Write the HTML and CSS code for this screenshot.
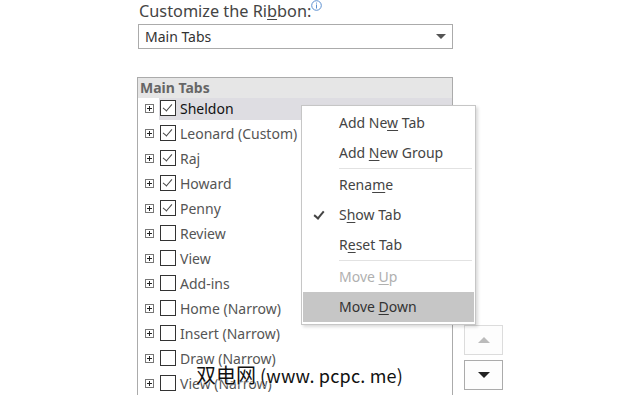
FILE: index.html
```html
<!DOCTYPE html>
<html lang="en">
<head>
  <meta charset="UTF-8" />
  <title>Customize the Ribbon</title>
  <link rel="stylesheet" href="styles.css">
</head>
<body>

<div class="panel">
  <div class="panel-title">
    Customize the Ri<u>b</u>bon:<svg class="info" width="11" height="11" viewBox="0 0 11 11">
      <circle cx="5.5" cy="5.5" r="4.8" fill="none" stroke="#5b8fd0" stroke-width="1"/>
      <rect x="5" y="4.5" width="1" height="4" fill="#5b8fd0"/>
      <rect x="5" y="2.6" width="1" height="1" fill="#5b8fd0"/>
    </svg>
  </div>

  <div class="select">
    <span>Main Tabs</span>
    <span class="caret"></span>
  </div>

  <div class="list-area">
    <div class="tree">
      <div class="tree-header">Main Tabs</div>
      <div class="row selected"><span class="plus"></span><span class="box checked"></span><span class="label">Sheldon</span></div>
      <div class="row"><span class="plus"></span><span class="box checked"></span><span class="label">Leonard (Custom)</span></div>
      <div class="row"><span class="plus"></span><span class="box checked"></span><span class="label">Raj</span></div>
      <div class="row"><span class="plus"></span><span class="box checked"></span><span class="label">Howard</span></div>
      <div class="row"><span class="plus"></span><span class="box checked"></span><span class="label">Penny</span></div>
      <div class="row"><span class="plus"></span><span class="box"></span><span class="label">Review</span></div>
      <div class="row"><span class="plus"></span><span class="box"></span><span class="label">View</span></div>
      <div class="row"><span class="plus"></span><span class="box"></span><span class="label">Add-ins</span></div>
      <div class="row"><span class="plus"></span><span class="box"></span><span class="label">Home (Narrow)</span></div>
      <div class="row"><span class="plus"></span><span class="box"></span><span class="label">Insert (Narrow)</span></div>
      <div class="row"><span class="plus"></span><span class="box"></span><span class="label">Draw (Narrow)</span></div>
      <div class="row"><span class="plus"></span><span class="box"></span><span class="label">View (Narrow)</span></div>
    </div>

    <div class="move-buttons">
      <div class="move-btn disabled"><span class="arrow-up"></span></div>
      <div class="move-btn"><span class="arrow-down"></span></div>
    </div>
  </div>
</div>

<!-- context menu -->
<div class="menu">
  <div class="menu-item">Add Ne<u>w</u> Tab</div>
  <div class="menu-item">Add <u>N</u>ew Group</div>
  <div class="menu-sep"></div>
  <div class="menu-item">Rena<u>m</u>e</div>
  <div class="menu-item checked">S<u>h</u>ow Tab</div>
  <div class="menu-item">R<u>e</u>set Tab</div>
  <div class="menu-sep"></div>
  <div class="menu-item disabled">Move <u>U</u>p</div>
  <div class="menu-item hover">Move <u>D</u>own</div>
</div>

<div class="watermark">双电网<span class="wm-latin">(www. pcpc. me)</span></div>

</body>
</html>
```

FILE: styles.css
```css
body {
  margin: 0;
  background: #fff;
  font-family: "Noto Sans", "Open Sans", sans-serif;
  color: #444;
  overflow: hidden;
  height: 395px;
}

.panel {
  padding-left: 138px;
  width: 420px;
}

.panel-title {
  font-size: 16.3px;
  line-height: 22px;
  height: 22px;
  padding-left: 1px;
  color: #444;
}

.panel-title u {
  text-decoration-thickness: 1px;
  text-underline-offset: 2px;
}

.info {
  vertical-align: 6px;
  margin-left: 0;
}

.select {
  margin-top: 2px;
  width: 301px;
  height: 23px;
  border: 1px solid #ababab;
  display: flex;
  align-items: center;
  justify-content: space-between;
  padding: 0 6px;
  font-size: 14px;
  color: #333;
}

.caret {
  width: 0;
  height: 0;
  border-left: 5px solid transparent;
  border-right: 5px solid transparent;
  border-top: 5px solid #555;
}

.list-area {
  display: flex;
  align-items: flex-start;
  margin-top: 28px;
}

.tree {
  margin-left: -1px;
  width: 314px;
  height: 340px;
  border: 1px solid #ababab;
  border-bottom: none;
  flex-shrink: 0;
}

.tree-header {
  height: 20px;
  background: #e6e6e6;
  font-weight: bold;
  color: #666;
  font-size: 14px;
  line-height: 20px;
  padding-left: 2px;
}

.row {
  height: 20px;
  padding-bottom: 5px;
  display: flex;
  align-items: center;
  font-size: 14px;
  color: #555;
}

.row.selected {
  background: linear-gradient(to right, #fff 21px, #dedde2 21px) no-repeat 0 0 / 100% 22px;
  color: #111;
}

.plus {
  width: 9px;
  height: 9px;
  border: 1px solid #777;
  box-sizing: border-box;
  margin-left: 7px;
  margin-right: 6px;
  position: relative;
  background: #fff;
}

.plus::before,
.plus::after {
  content: "";
  position: absolute;
  background: #222;
}

.plus::before {
  left: 1px;
  top: 3px;
  width: 5px;
  height: 1px;
}

.plus::after {
  left: 3px;
  top: 1px;
  width: 1px;
  height: 5px;
}

.box {
  width: 16px;
  height: 16px;
  border: 1px solid #333;
  box-sizing: border-box;
  margin-right: 4px;
  position: relative;
  background: #fff;
}

.box.checked::after {
  content: "";
  position: absolute;
  left: 4px;
  top: 1px;
  width: 4px;
  height: 8px;
  border-right: 1.5px solid #444;
  border-bottom: 1.5px solid #444;
  transform: rotate(40deg);
}

.move-buttons {
  margin-left: 11px;
  margin-top: 248px;
  display: flex;
  flex-direction: column;
  gap: 5px;
}

.move-btn {
  width: 39px;
  height: 30px;
  border: 1px solid #ababab;
  box-sizing: border-box;
  display: flex;
  align-items: center;
  justify-content: center;
  background: #fdfdfd;
}

.move-btn.disabled {
  border-color: #dcdcdc;
}

.arrow-up {
  border-left: 6px solid transparent;
  border-right: 6px solid transparent;
  border-bottom: 6px solid #bbb;
}

.arrow-down {
  border-left: 6px solid transparent;
  border-right: 6px solid transparent;
  border-top: 6px solid #222;
}

/* context menu */
.menu {
  position: absolute;
  left: 301px;
  top: 105px;
  width: 171px;
  padding: 2px 1px;
  background: #fff;
  border: 1px solid #c6c6c6;
  box-shadow: 2px 2px 3px rgba(0, 0, 0, 0.15);
}

.menu-item {
  height: 30px;
  line-height: 30px;
  padding-left: 36px;
  font-size: 14px;
  color: #444;
  position: relative;
}

.menu-item u {
  text-decoration-thickness: 1px;
  text-underline-offset: 2px;
}

.menu-item.checked::before {
  content: "";
  position: absolute;
  left: 13px;
  top: 9px;
  width: 4px;
  height: 8px;
  border-right: 2px solid #444;
  border-bottom: 2px solid #444;
  transform: rotate(40deg);
}

.menu-item.disabled {
  color: #b0b0b0;
}

.menu-item.hover {
  background: #c6c6c6;
  color: #333;
}

.menu-sep {
  height: 1px;
  margin: 0 2px 1px 36px;
  background: #e2e2e2;
}

.watermark {
  position: absolute;
  left: 196px;
  top: 360px;
  font-family: "Noto Sans CJK SC", sans-serif;
  font-size: 20px;
  color: #111;
  text-shadow: 0 0 2px #fff, 0 0 2px #fff;
}

.wm-latin {
  font-size: 18px;
  margin-left: 4px;
  letter-spacing: 0.2px;
}
```
